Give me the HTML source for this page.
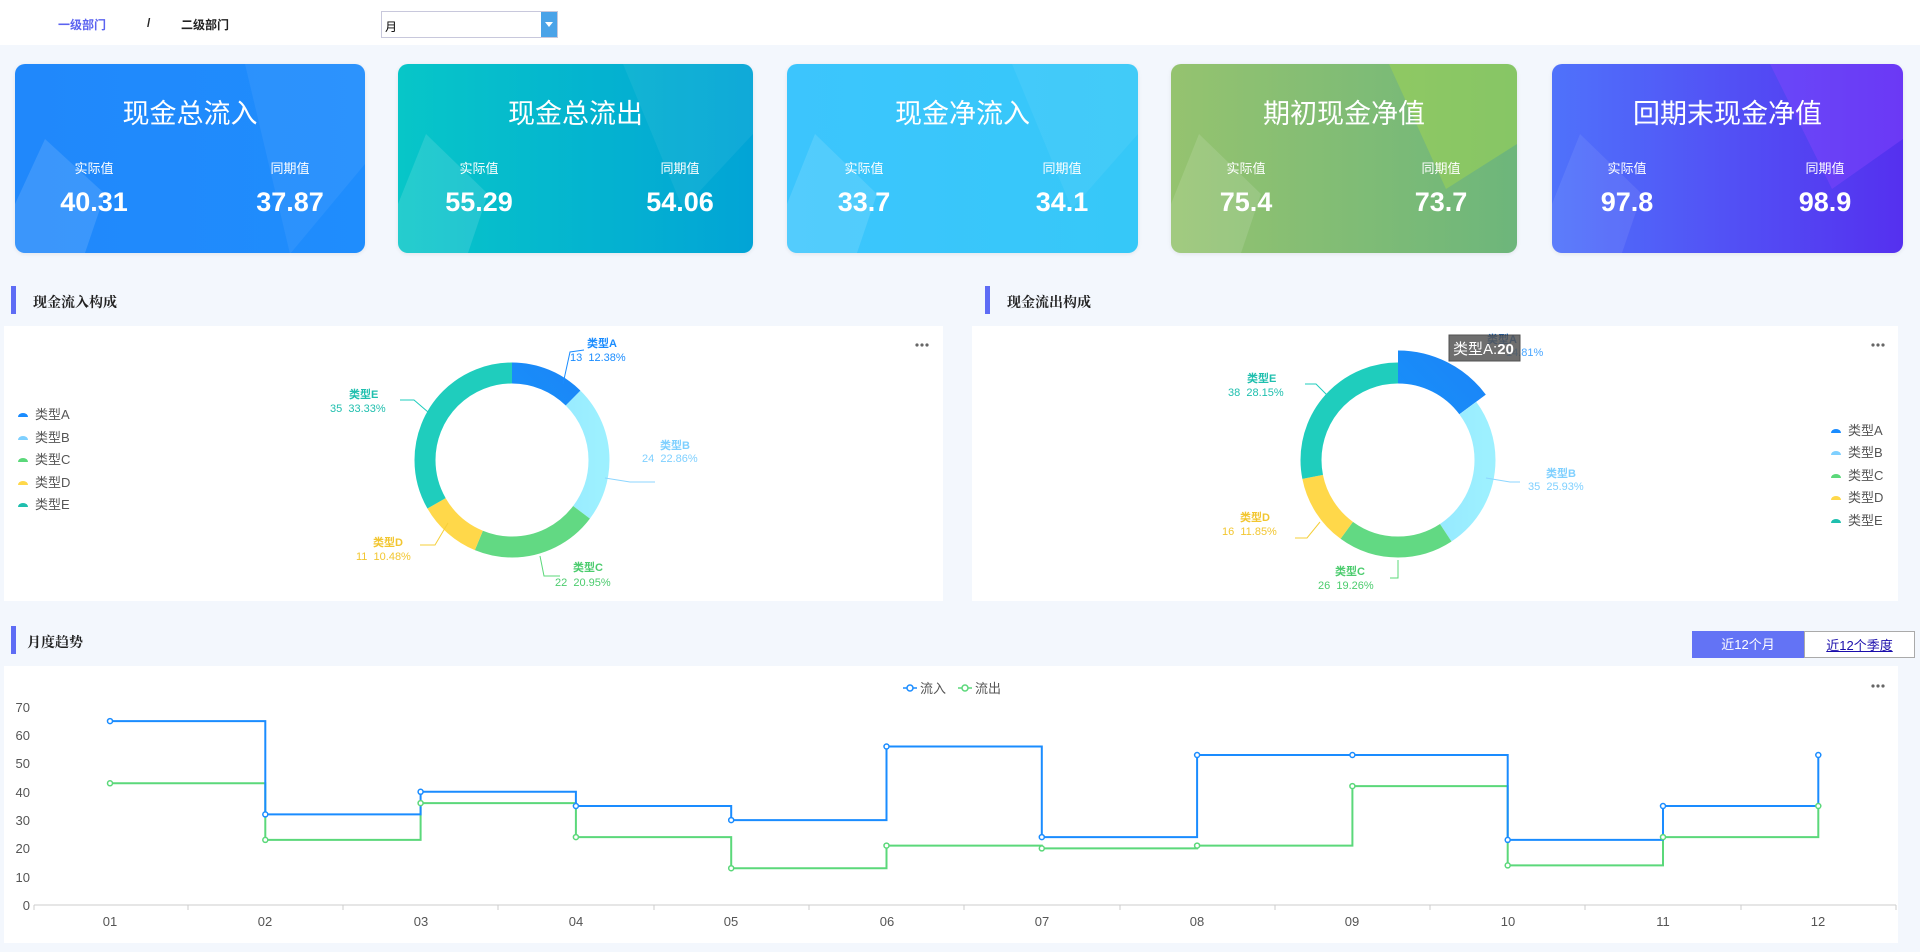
<!DOCTYPE html>
<html><head><meta charset="utf-8"><style>
*{margin:0;padding:0;box-sizing:border-box}
body{width:1920px;height:952px;background:#f3f7fd;font-family:"Liberation Sans","Noto Sans CJK SC",sans-serif;position:relative;overflow:hidden}
.hdr{position:absolute;left:0;top:0;width:1920px;height:45px;background:#fff}
.bc{position:absolute;top:16px;font-size:12px;font-weight:bold}
.sel{position:absolute;left:381px;top:11px;width:177px;height:27px;border:1px solid #c8c8dc;background:#fff;font-size:12px;padding:6px 3px}
.sel i{position:absolute;right:0;top:0;width:16px;height:25px;background:#4aa3e8}
.sel i:after{content:"";position:absolute;left:4px;top:10px;border:4px solid transparent;border-top:5px solid #fff}
.card{position:absolute;top:64px;height:189px;border-radius:10px;overflow:hidden;color:#fff;box-shadow:0 1px 4px rgba(0,0,0,.08)}
.card svg{position:absolute;left:0;top:0}
.t{position:absolute;top:28px;width:100%;text-align:center;font-size:27px}
.l{position:absolute;top:94px;font-size:13px;width:100px;text-align:center}
.n{position:absolute;top:123px;font-size:27px;font-weight:bold;width:100px;text-align:center}
.sh{position:absolute;font-size:14px;font-weight:bold;font-family:"Liberation Serif","Noto Serif CJK SC",serif;color:#222}
.sh b{position:absolute;left:-22px;top:-6px;width:5px;height:28px;background:#5e6cf5}
.pn{position:absolute;background:#fff}
.btn{position:absolute;top:631px;height:27px;font-size:13px;text-align:center;line-height:27px}
</style></head><body>
<div class="hdr"></div>
<div class="bc" style="left:58px;color:#5b63f0">一级部门</div>
<div class="bc" style="left:147px;color:#222">/</div>
<div class="bc" style="left:181px;color:#222">二级部门</div>
<div class="sel">月<i></i></div>

<div class="card" style="left:15px;width:350px;background:linear-gradient(90deg,#2088fb,#1f8dfd)">
<svg width="350" height="189"><polygon points="230,0 350,0 350,100 275,190" fill="#fff" opacity=".06"/><polygon points="0,140 30,75 90,130 70,189 0,189" fill="#fff" opacity=".12"/></svg>
<div class="t">现金总流入</div><div class="l" style="left:29px">实际值</div><div class="l" style="left:225px">同期值</div>
<div class="n" style="left:29px">40.31</div><div class="n" style="left:225px">37.87</div></div>
<div class="card" style="left:398px;width:355px;background:linear-gradient(90deg,#07c6c8,#02a4d6)">
<svg width="355" height="189"><polygon points="225,0 355,0 355,70 285,145" fill="#fff" opacity=".06"/><polygon points="0,140 28,70 90,130 70,189 0,189" fill="#fff" opacity=".12"/></svg>
<div class="t">现金总流出</div><div class="l" style="left:31px">实际值</div><div class="l" style="left:232px">同期值</div>
<div class="n" style="left:31px">55.29</div><div class="n" style="left:232px">54.06</div></div>
<div class="card" style="left:787px;width:351px;background:linear-gradient(90deg,#3cc5fd,#36c8f8)">
<svg width="351" height="189"><polygon points="225,0 351,0 351,70 285,145" fill="#fff" opacity=".06"/><polygon points="0,140 28,70 90,130 70,189 0,189" fill="#fff" opacity=".12"/></svg>
<div class="t">现金净流入</div><div class="l" style="left:27px">实际值</div><div class="l" style="left:225px">同期值</div>
<div class="n" style="left:27px">33.7</div><div class="n" style="left:225px">34.1</div></div>
<div class="card" style="left:1171px;width:346px;background:linear-gradient(90deg,#95c36f,#6db67b)">
<svg width="346" height="189"><polygon points="218,0 346,0 346,80 275,125" fill="#a6d94c" opacity=".45"/><polygon points="0,140 28,70 90,130 70,189 0,189" fill="#fff" opacity=".12"/></svg>
<div class="t">期初现金净值</div><div class="l" style="left:25px">实际值</div><div class="l" style="left:220px">同期值</div>
<div class="n" style="left:25px">75.4</div><div class="n" style="left:220px">73.7</div></div>
<div class="card" style="left:1552px;width:351px;background:linear-gradient(90deg,#4f72fb,#5530ef)">
<svg width="351" height="189"><polygon points="218,0 351,0 351,75 280,125" fill="#8b45ff" opacity=".4"/><polygon points="0,140 28,70 90,130 70,189 0,189" fill="#fff" opacity=".08"/></svg>
<div class="t">回期末现金净值</div><div class="l" style="left:25px">实际值</div><div class="l" style="left:223px">同期值</div>
<div class="n" style="left:25px">97.8</div><div class="n" style="left:223px">98.9</div></div>

<div class="sh" style="left:33px;top:292px"><b></b>现金流入构成</div>
<div class="sh" style="left:1007px;top:292px"><b></b>现金流出构成</div>
<div class="sh" style="left:27px;top:632px"><b style="left:-16px"></b>月度趋势</div>
<div class="pn" style="left:4px;top:326px;width:939px;height:275px"></div>
<div class="pn" style="left:972px;top:326px;width:926px;height:275px"></div>
<div class="pn" style="left:4px;top:666px;width:1894px;height:277px"></div>
<div class="btn" style="left:1692px;width:112px;background:#6373f5;color:#fff">近12个月</div>
<div class="btn" style="left:1804px;width:111px;background:#fff;border:1px solid #aaa;color:#1a0dab;text-decoration:underline">近12个季度</div>

<svg style="position:absolute;left:0;top:0" width="1920" height="952" font-family="Liberation Sans,Noto Sans CJK SC,sans-serif">
<defs>
<linearGradient id="ga" x1="0" y1="0" x2="1" y2="1"><stop offset="0" stop-color="#12a4ff"/><stop offset="1" stop-color="#1b84f7"/></linearGradient>
<linearGradient id="gb" x1="0" y1="0" x2="0" y2="1"><stop offset="0" stop-color="#83d6ff"/><stop offset="1" stop-color="#9df0ff"/></linearGradient>
</defs>
<g fill="#666"><circle cx="917" cy="345" r="1.6"/><circle cx="922" cy="345" r="1.6"/><circle cx="927" cy="345" r="1.6"/>
<circle cx="1873" cy="345" r="1.6"/><circle cx="1878" cy="345" r="1.6"/><circle cx="1883" cy="345" r="1.6"/>
<circle cx="1873" cy="686" r="1.6"/><circle cx="1878" cy="686" r="1.6"/><circle cx="1883" cy="686" r="1.6"/></g>
<g transform="rotate(-90 512 460)" fill="none" stroke-width="21">
<circle cx="512" cy="460" r="87" stroke="url(#ga)" stroke-dasharray="67.7 600"/>
<circle cx="512" cy="460" r="87" stroke="url(#gb)" stroke-dasharray="125 600" stroke-dashoffset="-67.7"/>
<circle cx="512" cy="460" r="87" stroke="#62d983" stroke-dasharray="114.5 600" stroke-dashoffset="-192.7"/>
<circle cx="512" cy="460" r="87" stroke="#ffd84a" stroke-dasharray="57.3 600" stroke-dashoffset="-307.2"/>
<circle cx="512" cy="460" r="87" stroke="#1fcdbd" stroke-dasharray="182.2 600" stroke-dashoffset="-364.5"/>
</g>
<g font-size="12" fill="none" stroke-width="1">
<polyline points="563,384 570,352 584,350" stroke="#1a8cff"/>
<polyline points="605,478 630,482 655,482" stroke="#8dd6ff"/>
<polyline points="540,556 544,576 560,576" stroke="#5bd87a"/>
<polyline points="448,523 435,545 420,545" stroke="#f5cf3a"/>
<polyline points="428,412 414,400 400,400" stroke="#1fcdbd"/>
</g>
<g font-size="11">
<text x="587" y="347" fill="#1a8cff" font-weight="bold">类型A</text><text x="570" y="361" fill="#1a8cff">13&#160;&#160;12.38%</text>
<text x="660" y="449" fill="#7fd0ff" font-weight="bold">类型B</text><text x="642" y="462" fill="#7fd0ff">24&#160;&#160;22.86%</text>
<text x="573" y="571" fill="#4ccc6e" font-weight="bold">类型C</text><text x="555" y="586" fill="#4ccc6e">22&#160;&#160;20.95%</text>
<text x="373" y="546" fill="#f2c630" font-weight="bold">类型D</text><text x="356" y="560" fill="#f2c630">11&#160;&#160;10.48%</text>
<text x="349" y="398" fill="#1fbfae" font-weight="bold">类型E</text><text x="330" y="412" fill="#1fbfae">35&#160;&#160;33.33%</text>
</g>
<g font-size="13" fill="#555">
<path d="M18 417a5 4 0 0 1 10 0z" fill="#1a8cff"/><text x="35" y="419">类型A</text>
<path d="M18 440a5 4 0 0 1 10 0z" fill="#7fd0ff"/><text x="35" y="442">类型B</text>
<path d="M18 462a5 4 0 0 1 10 0z" fill="#5bd87a"/><text x="35" y="464">类型C</text>
<path d="M18 485a5 4 0 0 1 10 0z" fill="#ffd84a"/><text x="35" y="487">类型D</text>
<path d="M18 507a5 4 0 0 1 10 0z" fill="#1fbfae"/><text x="35" y="509">类型E</text>
</g>
<g transform="rotate(-90 1398 460)" fill="none">
<circle cx="1398" cy="460" r="93" stroke="url(#ga)" stroke-width="33" stroke-dasharray="86.5 700"/>
<circle cx="1398" cy="460" r="87" stroke="url(#gb)" stroke-width="21" stroke-dasharray="141.7 600" stroke-dashoffset="-81"/>
<circle cx="1398" cy="460" r="87" stroke="#62d983" stroke-width="21" stroke-dasharray="105.3 600" stroke-dashoffset="-222.7"/>
<circle cx="1398" cy="460" r="87" stroke="#ffd84a" stroke-width="21" stroke-dasharray="64.8 600" stroke-dashoffset="-328"/>
<circle cx="1398" cy="460" r="87" stroke="#1fcdbd" stroke-width="21" stroke-dasharray="153.9 600" stroke-dashoffset="-392.8"/>
</g>
<g fill="none" stroke-width="1">
<polyline points="1486,478 1510,482 1520,482" stroke="#8dd6ff"/>
<polyline points="1398,560 1398,578 1390,578" stroke="#5bd87a"/>
<polyline points="1320,522 1307,538 1295,538" stroke="#f5cf3a"/>
<polyline points="1330,398 1316,384 1305,384" stroke="#1fcdbd"/>
</g>
<g font-size="11">
<text x="1546" y="477" fill="#7fd0ff" font-weight="bold">类型B</text><text x="1528" y="490" fill="#7fd0ff">35&#160;&#160;25.93%</text>
<text x="1335" y="575" fill="#4ccc6e" font-weight="bold">类型C</text><text x="1318" y="589" fill="#4ccc6e">26&#160;&#160;19.26%</text>
<text x="1240" y="521" fill="#f2c630" font-weight="bold">类型D</text><text x="1222" y="535" fill="#f2c630">16&#160;&#160;11.85%</text>
<text x="1247" y="382" fill="#1fbfae" font-weight="bold">类型E</text><text x="1228" y="396" fill="#1fbfae">38&#160;&#160;28.15%</text>
<text x="1487" y="343" fill="#1a6fd0" font-weight="bold">类型A</text><text x="1506" y="356" fill="#49a6ff">14.81%</text>
</g>
<rect x="1449" y="335" width="71" height="26" fill="#555" opacity=".85" stroke="#333"/>
<text x="1453" y="354" font-size="15" fill="#fff">类型A:<tspan font-weight="bold">20</tspan></text>
<g font-size="13" fill="#555">
<path d="M1831 433a5 4 0 0 1 10 0z" fill="#1a8cff"/><text x="1848" y="435">类型A</text>
<path d="M1831 455a5 4 0 0 1 10 0z" fill="#7fd0ff"/><text x="1848" y="457">类型B</text>
<path d="M1831 478a5 4 0 0 1 10 0z" fill="#5bd87a"/><text x="1848" y="480">类型C</text>
<path d="M1831 500a5 4 0 0 1 10 0z" fill="#ffd84a"/><text x="1848" y="502">类型D</text>
<path d="M1831 523a5 4 0 0 1 10 0z" fill="#1fbfae"/><text x="1848" y="525">类型E</text>
</g>
<g font-size="13" fill="#555">
<line x1="903" y1="688" x2="917" y2="688" stroke="#1a8cff" stroke-width="1.5"/><circle cx="910" cy="688" r="3" fill="#fff" stroke="#1a8cff" stroke-width="1.5"/><text x="920" y="693">流入</text>
<line x1="958" y1="688" x2="972" y2="688" stroke="#5bd87a" stroke-width="1.5"/><circle cx="965" cy="688" r="3" fill="#fff" stroke="#5bd87a" stroke-width="1.5"/><text x="975" y="693">流出</text>
</g>
<g font-size="13" fill="#555" text-anchor="end">
<text x="30" y="712">70</text><text x="30" y="740">60</text><text x="30" y="768">50</text><text x="30" y="797">40</text><text x="30" y="825">30</text><text x="30" y="853">20</text><text x="30" y="882">10</text><text x="30" y="910">0</text>
</g>
<line x1="34" y1="905" x2="1896" y2="905" stroke="#ccc"/>
<g stroke="#ccc"><line x1="34" y1="905" x2="34" y2="910"/><line x1="188" y1="905" x2="188" y2="910"/><line x1="343" y1="905" x2="343" y2="910"/><line x1="498" y1="905" x2="498" y2="910"/><line x1="654" y1="905" x2="654" y2="910"/><line x1="809" y1="905" x2="809" y2="910"/><line x1="964" y1="905" x2="964" y2="910"/><line x1="1120" y1="905" x2="1120" y2="910"/><line x1="1275" y1="905" x2="1275" y2="910"/><line x1="1430" y1="905" x2="1430" y2="910"/><line x1="1585" y1="905" x2="1585" y2="910"/><line x1="1741" y1="905" x2="1741" y2="910"/><line x1="1896" y1="905" x2="1896" y2="910"/></g>
<g font-size="13" fill="#555" text-anchor="middle">
<text x="110" y="926">01</text><text x="265" y="926">02</text><text x="421" y="926">03</text><text x="576" y="926">04</text><text x="731" y="926">05</text><text x="887" y="926">06</text><text x="1042" y="926">07</text><text x="1197" y="926">08</text><text x="1352" y="926">09</text><text x="1508" y="926">10</text><text x="1663" y="926">11</text><text x="1818" y="926">12</text>
</g>
<path d="M110 783.3H265.3V839.9H420.6V803.1H575.9V837.1H731.2V868.2H886.5V845.6H1041.8V848.4H1197.1V845.6H1352.4V786.1H1507.7V865.4H1663V837.1H1818.3V806" fill="none" stroke="#5bd87a" stroke-width="2"/>
<path d="M110 721.1H265.3V814.4H420.6V791.8H575.9V806H731.2V820.1H886.5V746.5H1041.8V837.1H1197.1V755H1352.4V755H1507.7V839.9H1663V806H1818.3V755" fill="none" stroke="#1a8cff" stroke-width="2"/>
<g fill="#fff" stroke="#5bd87a" stroke-width="1.5">
<circle cx="110" cy="783.3" r="2.5"/><circle cx="265.3" cy="839.9" r="2.5"/><circle cx="420.6" cy="803.1" r="2.5"/><circle cx="575.9" cy="837.1" r="2.5"/><circle cx="731.2" cy="868.2" r="2.5"/><circle cx="886.5" cy="845.6" r="2.5"/><circle cx="1041.8" cy="848.4" r="2.5"/><circle cx="1197.1" cy="845.6" r="2.5"/><circle cx="1352.4" cy="786.1" r="2.5"/><circle cx="1507.7" cy="865.4" r="2.5"/><circle cx="1663" cy="837.1" r="2.5"/><circle cx="1818.3" cy="806" r="2.5"/></g>
<g fill="#fff" stroke="#1a8cff" stroke-width="1.5">
<circle cx="110" cy="721.1" r="2.5"/><circle cx="265.3" cy="814.4" r="2.5"/><circle cx="420.6" cy="791.8" r="2.5"/><circle cx="575.9" cy="806" r="2.5"/><circle cx="731.2" cy="820.1" r="2.5"/><circle cx="886.5" cy="746.5" r="2.5"/><circle cx="1041.8" cy="837.1" r="2.5"/><circle cx="1197.1" cy="755" r="2.5"/><circle cx="1352.4" cy="755" r="2.5"/><circle cx="1507.7" cy="839.9" r="2.5"/><circle cx="1663" cy="806" r="2.5"/><circle cx="1818.3" cy="755" r="2.5"/></g>
</svg>
</body></html>
